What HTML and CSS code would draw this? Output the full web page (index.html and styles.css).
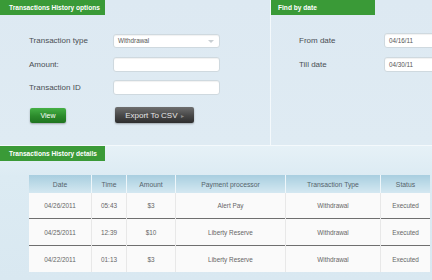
FILE: index.html
```html
<!DOCTYPE html>
<html>
<head>
    <title>Transactions History</title>
    <link rel="stylesheet" href="styles.css">
</head>
<body>
    <div class="top">
        <div class="panel options">
            <div class="tab">Transactions History options</div>
            <div class="form">
                <label>Transaction type</label>
                <div class="field select">Withdrawal<span class="arrow"></span></div>
                <label>Amount:</label>
                <div class="field"></div>
                <label>Transaction ID</label>
                <div class="field"></div>
            </div>
            <div class="buttons">
                <button class="btn btn-view">View</button>
                <button class="btn btn-export">Export To CSV <span class="caret">&#9656;</span></button>
            </div>
        </div>
        <div class="panel dates">
            <div class="tab">Find by date</div>
            <div class="form date-form">
                <label>From date</label>
                <div class="field">04/16/11</div>
                <label>Till date</label>
                <div class="field">04/30/11</div>
            </div>
        </div>
    </div>

    <div class="details">
        <div class="tab">Transactions History details</div>
        <table class="history">
            <thead>
                <tr>
                    <th class="c-date">Date</th>
                    <th class="c-time">Time</th>
                    <th class="c-amount">Amount</th>
                    <th class="c-proc">Payment processor</th>
                    <th class="c-type">Transaction Type</th>
                    <th class="c-status">Status</th>
                </tr>
            </thead>
            <tbody>
                <tr>
                    <td>04/26/2011</td>
                    <td>05:43</td>
                    <td>$3</td>
                    <td>Alert Pay</td>
                    <td>Withdrawal</td>
                    <td>Executed</td>
                </tr>
                <tr>
                    <td>04/25/2011</td>
                    <td>12:39</td>
                    <td>$10</td>
                    <td>Liberty Reserve</td>
                    <td>Withdrawal</td>
                    <td>Executed</td>
                </tr>
                <tr>
                    <td>04/22/2011</td>
                    <td>01:13</td>
                    <td>$3</td>
                    <td>Liberty Reserve</td>
                    <td>Withdrawal</td>
                    <td>Executed</td>
                </tr>
            </tbody>
        </table>
    </div>
</body>
</html>
```

FILE: styles.css
```css
body {
    margin: 0;
    width: 432px;
    height: 280px;
    overflow: hidden;
    background-color: #dceaf2;
    font-family: "Liberation Sans", Arial, sans-serif;
}

.top {
    display: flex;
    height: 145px;
    border-bottom: 1px solid #f4f9fc;
}

.panel {
    background: linear-gradient(#dde9f2, #dfebf3);
}

.options {
    flex: 0 0 270px;
    border-right: 1px solid #f4f9fc;
}

.dates {
    flex: 1;
    min-width: 0;
    overflow: hidden;
}

.tab {
    width: 105px;
    height: 15px;
    line-height: 15px;
    box-sizing: border-box;
    padding-left: 9px;
    background-color: #3a9a37;
    color: #fff;
    font-size: 6.6px;
    font-weight: bold;
    white-space: nowrap;
}

.dates .tab {
    width: 104px;
    padding-left: 7px;
}

.form {
    display: grid;
    grid-template-columns: 84px 107px;
    grid-auto-rows: 15px;
    row-gap: 8.5px;
    align-items: center;
    margin: 18px 0 0 29px;
}

.date-form {
    grid-template-columns: 85px 60px;
    margin-left: 28px;
}

label {
    font-size: 8px;
    color: #4a4f54;
}

.field {
    position: relative;
    height: 15px;
    box-sizing: border-box;
    padding-left: 4px;
    line-height: 13px;
    background-color: #fff;
    border: 1px solid #cfd9df;
    border-radius: 3px;
    box-shadow: inset 0 1px 1px rgba(0,0,0,0.06);
    font-size: 6.3px;
    color: #555;
}

.select {
    height: 14px;
    line-height: 12px;
}

.arrow {
    position: absolute;
    right: 5px;
    top: 5px;
    border-left: 3px solid transparent;
    border-right: 3px solid transparent;
    border-top: 3px solid #c9cfd3;
}

.buttons {
    display: flex;
    align-items: center;
    margin: 12px 0 0 30px;
}

.btn {
    border: none;
    border-radius: 2px;
    color: #fff;
    font-family: inherit;
    padding: 0;
    box-shadow: 0 1px 2px rgba(0,0,0,0.3);
}

.btn-view {
    width: 36px;
    height: 15px;
    font-size: 7px;
    background: linear-gradient(#45b045, #2b8a2b 55%, #1f7420);
}

.btn-export {
    width: 79px;
    height: 16px;
    margin-left: 49px;
    font-size: 8px;
    color: #e6e6e6;
    background: linear-gradient(#6e6e6e, #4a4a4a 50%, #2e2e2e);
}

.caret {
    margin-left: 1px;
    color: #8a8a8a;
    font-size: 6px;
}

.details {
    height: 134px;
    background: linear-gradient(#e6f1f7, #dcebf3 30px, #d9e8f1);
}

.history {
    margin: 14px 0 0 29px;
    width: 401px;
    table-layout: fixed;
    border-collapse: collapse;
    background-color: #fafafa;
    font-size: 6.4px;
    color: #666;
    text-align: center;
}

.history th {
    height: 18px;
    padding: 0;
    font-weight: normal;
    font-size: 6.8px;
    color: #56646c;
    background: linear-gradient(#a8cedf, #d4e8f1);
    border-left: 1px solid #eef6fa;
}

.history th:first-child,
.history td:first-child {
    border-left: none;
}

.history td {
    height: 25px;
    padding: 0;
    border-left: 1px solid #e8e8e8;
}

.history tbody tr + tr td {
    height: 26px;
    border-top: 1px solid #6f6f6f;
}

.c-date { width: 62px; }
.c-time { width: 34px; }
.c-amount { width: 48px; }
.c-proc { width: 109px; }
.c-type { width: 94px; }
.c-status { width: 49px; }
```
